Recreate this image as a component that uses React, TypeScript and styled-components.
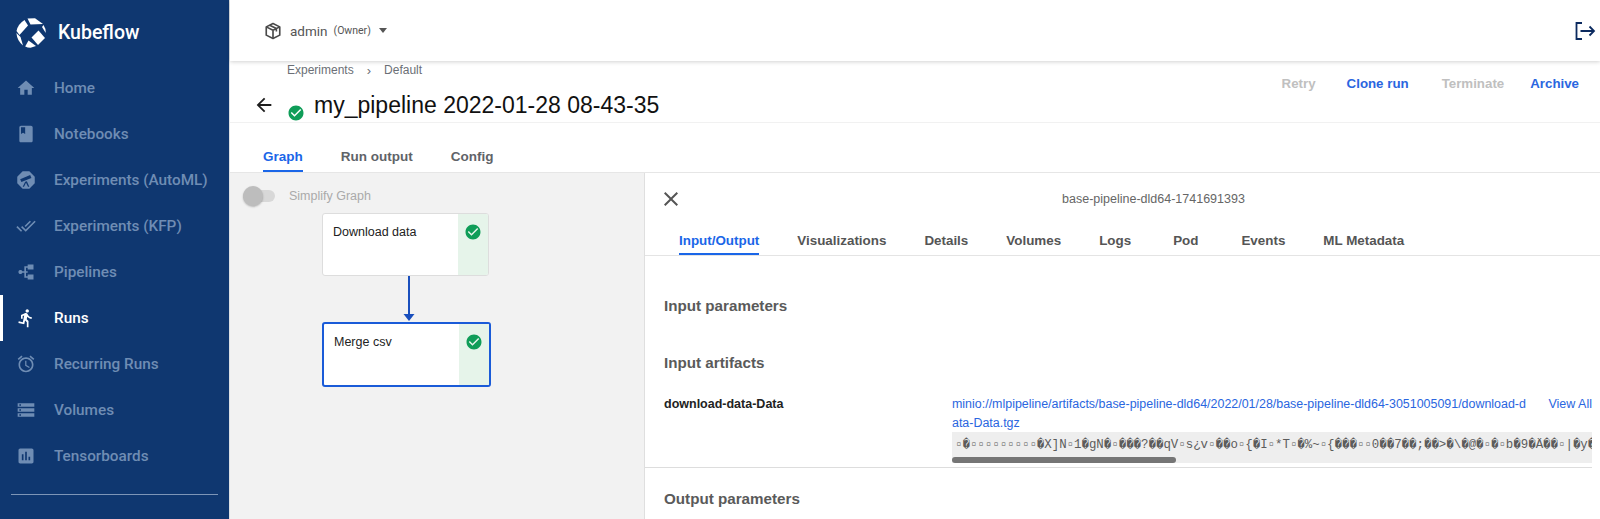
import React from 'react';
import styled, { createGlobalStyle } from 'styled-components';

const GlobalStyle = createGlobalStyle`
  html, body {
    margin: 0;
    height: 100%;
    overflow: hidden;
    background: #fff;
  }
  body {
    font-family: "Liberation Sans", Arial, sans-serif;
  }
`;

const navItems = [
  { label: 'Home', d: 'M10 20v-6h4v6h5v-8h3L12 3 2 12h3v8z' },
  { label: 'Notebooks', d: 'M18 2H6c-1.1 0-2 .9-2 2v16c0 1.1.9 2 2 2h12c1.1 0 2-.9 2-2V4c0-1.1-.9-2-2-2zM6 4h5v8l-2.5-1.5L6 12V4z' },
  { label: 'Experiments (AutoML)', d: 'M8 1.5h8L22.5 8v8L16 22.5H8L1.5 16V8zM5 11l12-5 1.5 3.5-12 5zM11 14l-3 6h1.6l2.4-4.6 2.4 4.6H16l-3-6.5z' },
  { label: 'Experiments (KFP)', d: 'M18 7l-1.41-1.41-6.34 6.34 1.41 1.41L18 7zm4.24-1.41L11.66 16.17 7.48 12l-1.41 1.41L11.66 19l12-12-1.42-1.41zM.41 13.41L6 19l1.41-1.41L1.83 12 .41 13.41z' },
  { label: 'Pipelines', d: 'M14 3h7v6h-7V7h-2v4h2v2h-2v4h2v-2h7v6h-7v-2h-4v-6H7.7a2.5 2.5 0 1 1 0-2H10V5h4z' },
  { label: 'Runs', active: true, d: 'M13.49 5.48c1.1 0 2-.9 2-2s-.9-2-2-2-2 .9-2 2 .9 2 2 2zm-3.6 13.9l1-4.4 2.1 2v6h2v-7.5l-2.1-2 .6-3c1.3 1.5 3.3 2.5 5.5 2.5v-2c-1.9 0-3.5-1-4.3-2.4l-1-1.6c-.4-.6-1-1-1.7-1-.3 0-.5.1-.8.1l-5.2 2.2v4.7h2v-3.4l1.8-.7-1.6 8.1-4.9-1-.4 2 7 1.4z' },
  { label: 'Recurring Runs', d: 'M22 5.72l-4.6-3.86-1.29 1.53 4.6 3.86L22 5.72zM7.88 3.39L6.6 1.86 2 5.71l1.29 1.53 4.59-3.85zM12.5 8H11v6l4.75 2.85.75-1.23-4-2.37V8zM12 4c-4.97 0-9 4.03-9 9s4.03 9 9 9 9-4.03 9-9-4.03-9-9-9zm0 16c-3.87 0-7-3.13-7-7s3.13-7 7-7 7 3.13 7 7-3.13 7-7 7z' },
  { label: 'Volumes', d: 'M2 20h20v-4H2v4zm2-3h2v2H4v-2zM2 4v4h20V4H2zm4 3H4V5h2v2zm-4 7h20v-4H2v4zm2-3h2v2H4v-2z' },
  { label: 'Tensorboards', d: 'M19 3H5c-1.1 0-2 .9-2 2v14c0 1.1.9 2 2 2h14c1.1 0 2-.9 2-2V5c0-1.1-.9-2-2-2zM9 17H7v-7h2v7zm4 0h-2V7h2v10zm4 0h-2v-4h2v4z' },
];

const CHECK = 'M12 2C6.48 2 2 6.48 2 12s4.48 10 10 10 10-4.48 10-10S17.52 2 12 2zm-2 15l-5-5 1.41-1.41L10 14.17l7.59-7.59L19 8l-9 9z';
const GARBLED = '\u25AB\uFFFD\u25AB\u25AB\u25AB\u25AB\u25AB\u25AB\u25AB\u25AB\u25AB\uFFFDX]N\u25AB1\uFFFDgN\uFFFD\u25AB\uFFFD\uFFFD\uFFFD?\uFFFD\uFFFDqV\u25ABs\u00BFv\u25AB\uFFFD\uFFFDo\u25AB{\uFFFDI\u25AB*T\u25AB\uFFFD%~\u25AB{\uFFFD\uFFFD\uFFFD\u25AB\u25AB0\uFFFD\uFFFD7\uFFFD\uFFFD;\uFFFD\uFFFD>\uFFFD\\\uFFFD@\uFFFD\u25AB\uFFFD\u25ABb\uFFFD9\uFFFD\u00C4\uFFFD\uFFFD\u25AB|\uFFFDy\uFFFD\u25AB';

export default function App() {
  return (
    <>
      <GlobalStyle />
      <Shell>
        <Sidebar>
          <Brand>
            <svg width="30" height="30" viewBox="0 0 30 30">
              <g fill="#fff">
                <path d="M11.5.6 L19 .3 L27 6 L14.5 6.5 Z" />
                <path d="M8.5 2 L12 7.5 L3.5 17 L.5 13 Q2 6 8.5 2Z" />
                <path d="M.4 15 L4.5 19 L7 27.5 Q1 22.5 .4 15Z" />
                <path d="M22.5 12.5 L29 20 L22 27 L15.5 19.5Z" />
                <path d="M27.5 7 Q29.7 10 29.8 15 L26 9Z" />
                <path d="M12.5 22.5 L20 28 L14.5 29.8 Q11.5 29.7 9.2 28.5Z" />
              </g>
            </svg>
            <BrandName>Kubeflow</BrandName>
          </Brand>
          <Nav>
            {navItems.map((item) => (
              <NavItem key={item.label} $active={item.active}>
                <svg width="24" height="24" viewBox="0 0 24 24" fill="currentColor">
                  <path fillRule="evenodd" d={item.d} />
                </svg>
                <span>{item.label}</span>
              </NavItem>
            ))}
          </Nav>
          <SideDivider />
        </Sidebar>

        <Main>
          <TopBar>
            <Namespace>
              <svg width="18" height="18" viewBox="0 0 24 24" fill="none" stroke="#4a4a4a" strokeWidth="2.2" strokeLinejoin="round">
                <path d="M12 2l9 4.5v11L12 22l-9-4.5v-11z" />
                <path d="M3 6.5l9 4.5 9-4.5M12 11v11M7.5 4.2l9 4.6v4" />
              </svg>
              <NamespaceName>admin</NamespaceName>
              <Role>(Owner)</Role>
              <Caret />
            </Namespace>
            <svg width="22" height="22" viewBox="0 0 22 22" fill="none" stroke="#0b2a5f" strokeWidth="1.8">
              <path d="M8 3H2.5v16H8" />
              <path d="M6.5 11H20M15.5 6.5L20 11l-4.5 4.5" />
            </svg>
          </TopBar>

          <PageHeader>
            <div>
              <Crumbs>
                <span>Experiments</span>
                <CrumbSep>›</CrumbSep>
                <span>Default</span>
              </Crumbs>
              <TitleRow>
                <svg width="22" height="22" viewBox="0 0 24 24" fill="#1e1e1e">
                  <path d="M20 11H7.83l5.59-5.59L12 4l-8 8 8 8 1.41-1.41L7.83 13H20v-2z" />
                </svg>
                <TitleStatus>
                  <svg width="18" height="18" viewBox="0 0 24 24" fill="#0f9d58">
                    <path fillRule="evenodd" d={CHECK} />
                  </svg>
                </TitleStatus>
                <Title>my_pipeline 2022-01-28 08-43-35</Title>
              </TitleRow>
            </div>
            <Actions>
              <Action $gap={0}>Retry</Action>
              <Action $primary $gap={31}>Clone run</Action>
              <Action $gap={33}>Terminate</Action>
              <Action $primary $gap={26}>Archive</Action>
            </Actions>
          </PageHeader>

          <RunTabs>
            <RunTab $active>Graph</RunTab>
            <RunTab>Run output</RunTab>
            <RunTab>Config</RunTab>
          </RunTabs>

          <Body>
            <GraphPane>
              <SimplifyRow>
                <Toggle />
                <span>Simplify Graph</span>
              </SimplifyRow>
              <GraphNode $top={40} $left={92}>
                <NodeLabel>Download data</NodeLabel>
                <NodeStatus>
                  <svg width="18" height="18" viewBox="0 0 24 24" fill="#0f9d58">
                    <path fillRule="evenodd" d={CHECK} />
                  </svg>
                </NodeStatus>
              </GraphNode>
              <Edge width="14" height="46" viewBox="0 0 14 46">
                <path d="M7 0V38" stroke="#1a4fbd" strokeWidth="2" />
                <path d="M1.5 38h11L7 45z" fill="#1a4fbd" />
              </Edge>
              <GraphNode $top={149} $left={92} $selected>
                <NodeLabel>Merge csv</NodeLabel>
                <NodeStatus>
                  <svg width="18" height="18" viewBox="0 0 24 24" fill="#0f9d58">
                    <path fillRule="evenodd" d={CHECK} />
                  </svg>
                </NodeStatus>
              </GraphNode>
            </GraphPane>

            <DetailPane>
              <DetailHead>
                <svg width="24" height="24" viewBox="0 0 24 24" fill="#555">
                  <path d="M19 6.41L17.59 5 12 10.59 6.41 5 5 6.41 10.59 12 5 17.59 6.41 19 12 13.41 17.59 19 19 17.59 13.41 12z" />
                </svg>
                <PodName>base-pipeline-dld64-1741691393</PodName>
              </DetailHead>
              <DetailTabs>
                <DetailTab $active>Input/Output</DetailTab>
                <DetailTab>Visualizations</DetailTab>
                <DetailTab>Details</DetailTab>
                <DetailTab>Volumes</DetailTab>
                <DetailTab>Logs</DetailTab>
                <DetailTab $wide>Pod</DetailTab>
                <DetailTab>Events</DetailTab>
                <DetailTab>ML Metadata</DetailTab>
              </DetailTabs>
              <DetailBody>
                <SectionTitle $gap={41}>Input parameters</SectionTitle>
                <SectionTitle $gap={40}>Input artifacts</SectionTitle>
                <ArtifactRow>
                  <ArtifactName>download-data-Data</ArtifactName>
                  <ArtifactValue>
                    <LinkRow>
                      <ArtifactLink>
                        minio://mlpipeline/artifacts/base-pipeline-dld64/2022/01/28/base-pipeline-dld64-3051005091/download-data-Data.tgz
                      </ArtifactLink>
                      <ViewAll>View All</ViewAll>
                    </LinkRow>
                    <Preview>
                      <PreviewText>{GARBLED}</PreviewText>
                      <ScrollThumb />
                    </Preview>
                  </ArtifactValue>
                </ArtifactRow>
                <SectionTitle $gap={22}>Output parameters</SectionTitle>
              </DetailBody>
            </DetailPane>
          </Body>
        </Main>
      </Shell>
    </>
  );
}

const Shell = styled.div`
  display: flex;
  width: 1600px;
  height: 519px;
  overflow: hidden;
`;

const Sidebar = styled.aside`
  flex: 0 0 230px;
  display: flex;
  flex-direction: column;
  background: #0f3770;
  border-right: 1px solid #dcdfe3;
  box-sizing: border-box;
`;

const Brand = styled.div`
  display: flex;
  align-items: center;
  gap: 12px;
  height: 65px;
  padding-left: 16px;
`;

const BrandName = styled.div`
  font-family: Roboto, sans-serif;
  font-weight: 500;
  font-size: 19.5px;
  color: #fff;
`;

const Nav = styled.nav`
  display: flex;
  flex-direction: column;
`;

const NavItem = styled.div<{ $active?: boolean }>`
  display: flex;
  align-items: center;
  gap: 18px;
  height: 46px;
  padding-left: 13px;
  border-left: 3px solid ${(p) => (p.$active ? '#fff' : 'transparent')};
  color: ${(p) => (p.$active ? '#fff' : '#6f8db4')};
  font-family: Roboto, sans-serif;
  font-weight: 500;
  font-size: 15.3px;

  svg {
    flex: none;
    width: 20px;
    height: 20px;
  }
`;

const SideDivider = styled.div`
  height: 1px;
  margin: 15px 11px 0;
  background: #7d95b7;
`;

const Main = styled.main`
  flex: 1;
  min-width: 0;
  display: flex;
  flex-direction: column;
`;

const TopBar = styled.header`
  flex: 0 0 61px;
  display: flex;
  align-items: center;
  justify-content: space-between;
  padding: 0 4px 0 34px;
  box-shadow: 0 1px 4px rgba(0, 0, 0, 0.18);
  position: relative;
`;

const Namespace = styled.div`
  display: flex;
  align-items: center;
  color: #555;
  font-family: Roboto, sans-serif;
`;

const NamespaceName = styled.span`
  margin-left: 8px;
  font-size: 13.5px;
`;

const Role = styled.span`
  margin-left: 6px;
  font-size: 10.5px;
`;

const Caret = styled.span`
  margin-left: 8px;
  border-left: 4.5px solid transparent;
  border-right: 4.5px solid transparent;
  border-top: 5px solid #555;
`;

const PageHeader = styled.div`
  flex: 0 0 62px;
  display: flex;
  justify-content: space-between;
  box-sizing: border-box;
  border-bottom: 1px solid #f1f1f1;
  padding-left: 23px;
`;

const Crumbs = styled.div`
  display: flex;
  gap: 13px;
  height: 18px;
  align-items: center;
  margin-left: 34px;
  color: #6b6f76;
  font-size: 12px;
`;

const CrumbSep = styled.span`
  font-size: 13px;
`;

const TitleRow = styled.div`
  display: flex;
  align-items: center;
  height: 30px;
  margin-top: 11px;
`;

const TitleStatus = styled.span`
  display: flex;
  margin: 16px 9px 0 12px;
`;

const Title = styled.h1`
  margin: 0;
  font-size: 23px;
  font-weight: 400;
  color: #111;
`;

const Actions = styled.div`
  display: flex;
  padding: 15px 21px 0 0;
`;

const Action = styled.span<{ $primary?: boolean; $gap: number }>`
  margin-left: ${(p) => p.$gap}px;
  font-size: 13.3px;
  font-weight: 700;
  color: ${(p) => (p.$primary ? '#2a66e0' : '#c0c0c0')};
`;

const RunTabs = styled.div`
  flex: 0 0 49px;
  display: flex;
  gap: 38px;
  padding-left: 33px;
  box-sizing: border-box;
`;

const RunTab = styled.div<{ $active?: boolean }>`
  display: flex;
  align-items: center;
  height: 49px;
  padding-top: 20px;
  box-sizing: border-box;
  font-size: 13.5px;
  font-weight: 700;
  color: ${(p) => (p.$active ? '#1a66e8' : '#5f6368')};
  border-bottom: ${(p) => (p.$active ? '2px solid #1a66e8' : '2px solid transparent')};
`;

const Body = styled.div`
  flex: 1;
  min-height: 0;
  display: flex;
  border-top: 1px solid #e6e6e6;
`;

const GraphPane = styled.section`
  flex: 0 0 415px;
  position: relative;
  background: #f2f2f2;
  border-right: 1px solid #dfdfdf;
  box-sizing: border-box;
`;

const SimplifyRow = styled.div`
  display: flex;
  align-items: center;
  gap: 14px;
  padding: 16px 0 0 13px;
  color: #aaa;
  font-size: 12.5px;
`;

const Toggle = styled.span`
  position: relative;
  width: 32px;
  height: 12px;
  border-radius: 6px;
  background: #d8d8d8;

  &::before {
    content: '';
    position: absolute;
    left: 0;
    top: -4px;
    width: 20px;
    height: 20px;
    border-radius: 50%;
    background: #bdbdbd;
    box-shadow: 0 1px 2px rgba(0, 0, 0, 0.25);
  }
`;

const GraphNode = styled.div<{ $top: number; $left: number; $selected?: boolean }>`
  position: absolute;
  top: ${(p) => p.$top}px;
  left: ${(p) => p.$left}px;
  width: ${(p) => (p.$selected ? 169 : 167)}px;
  height: ${(p) => (p.$selected ? 65 : 63)}px;
  box-sizing: border-box;
  display: flex;
  background: #fff;
  border: ${(p) => (p.$selected ? '2px solid #1a5bd8' : '1px solid #ddd')};
  border-radius: 3px;
  overflow: hidden;
`;

const NodeLabel = styled.div`
  flex: 1;
  padding: 11px 0 0 10px;
  color: #222;
  font-size: 12.5px;
`;

const NodeStatus = styled.div`
  flex: 0 0 30px;
  display: flex;
  justify-content: center;
  padding-top: 9px;
  height: 100%;
  box-sizing: border-box;
  background: #e6f4ea;
`;

const Edge = styled.svg`
  position: absolute;
  top: 103px;
  left: 172px;
`;

const DetailPane = styled.section`
  flex: 1;
  min-width: 0;
  display: flex;
  flex-direction: column;
`;

const DetailHead = styled.div`
  flex: 0 0 52px;
  position: relative;
  display: flex;
  align-items: center;
  justify-content: center;
  padding-left: 62px;

  svg {
    position: absolute;
    left: 14px;
    top: 14px;
  }
`;

const PodName = styled.div`
  color: #666;
  font-size: 12.5px;
`;

const DetailTabs = styled.div`
  flex: 0 0 30px;
  display: flex;
  gap: 38px;
  padding-left: 34px;
  box-sizing: border-box;
  border-bottom: 1px solid #e4e4e4;
`;

const DetailTab = styled.div<{ $active?: boolean; $wide?: boolean }>`
  height: 30px;
  box-sizing: border-box;
  margin: ${(p) => (p.$wide ? '0 5px 0 4px' : '0')};
  padding-top: 8px;
  font-size: 13.4px;
  font-weight: 700;
  color: ${(p) => (p.$active ? '#1a66e8' : '#555')};
  border-bottom: ${(p) => (p.$active ? '2px solid #1a66e8' : '2px solid transparent')};
`;

const DetailBody = styled.div`
  padding: 0 8px 0 19px;
`;

const SectionTitle = styled.h2<{ $gap: number }>`
  margin: ${(p) => p.$gap}px 0 0;
  font-size: 15.2px;
  line-height: 17px;
  font-weight: 700;
  color: #5a5a5a;
`;

const ArtifactRow = styled.div`
  display: flex;
  padding: 24px 0 4px 19px;
  margin-left: -19px;
  border-bottom: 1px solid #ddd;
`;

const ArtifactName = styled.div`
  flex: 0 0 288px;
  font-size: 12.5px;
  font-weight: 700;
  color: #222;
  line-height: 18.5px;
`;

const ArtifactValue = styled.div`
  flex: 1;
  min-width: 0;
`;

const LinkRow = styled.div`
  display: flex;
  justify-content: space-between;
  gap: 18px;
`;

const ArtifactLink = styled.a`
  flex: 1;
  min-width: 0;
  word-break: break-all;
  font-size: 12.45px;
  line-height: 18.5px;
  color: #2a66e0;
`;

const ViewAll = styled.a`
  flex: none;
  font-size: 12.5px;
  line-height: 18.5px;
  color: #2a66e0;
`;

const Preview = styled.div`
  height: 31px;
  box-sizing: border-box;
  padding-top: 6px;
  background: #eee;
  overflow: hidden;
`;

const PreviewText = styled.div`
  font-family: "Liberation Mono", monospace;
  font-size: 12.4px;
  line-height: 15px;
  color: #5c5c5c;
  white-space: nowrap;
  padding-left: 3px;
`;

const ScrollThumb = styled.div`
  width: 224px;
  height: 6px;
  margin-top: 4px;
  border-radius: 3px;
  background: #757575;
`;
